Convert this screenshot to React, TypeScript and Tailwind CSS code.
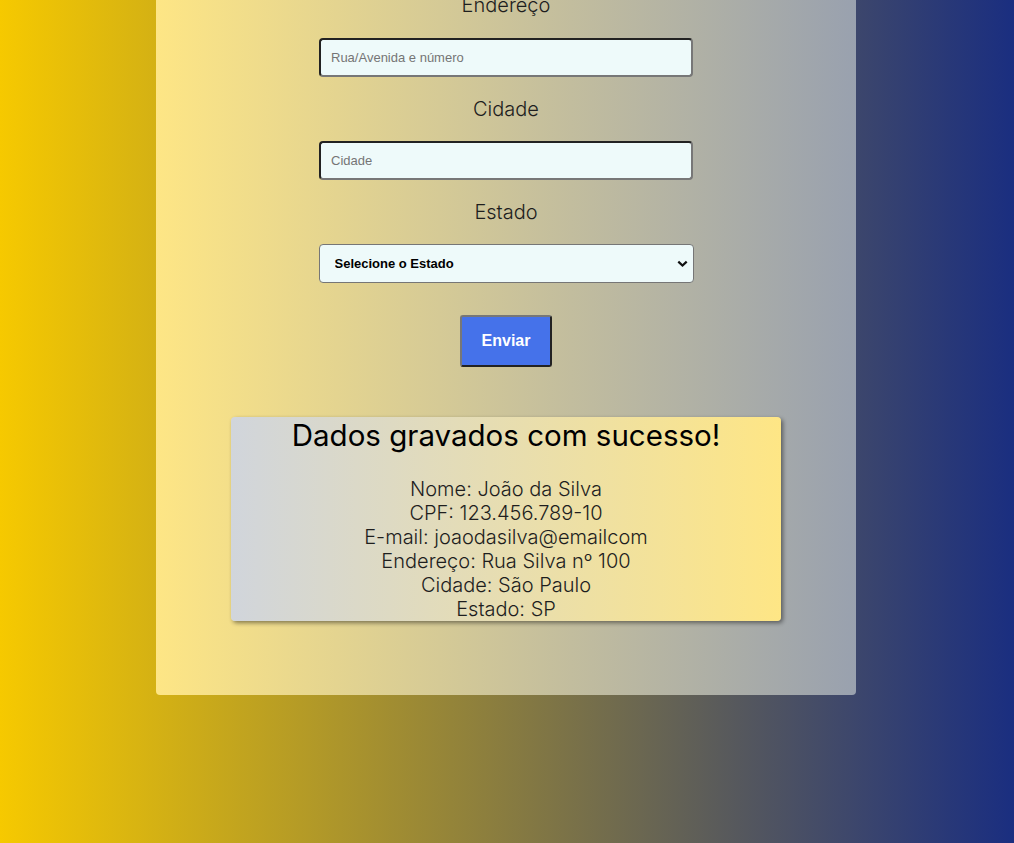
import React from "react";

const inputCls =
  "w-[374px] h-[39px] rounded-[4px] border-2 border-solid border-t-[#222] border-l-[#222] border-b-[#777] border-r-[#777] bg-[#eefafa] pl-[10px] text-[13px] text-black placeholder:text-[#757575] outline-none";

function Label({ children, className = "" }: { children: React.ReactNode; className?: string }) {
  return (
    <label className={"block text-[20px] leading-[24px] font-light text-[#1e1e1e] " + className}>
      {children}
    </label>
  );
}

export default function App() {
  const lines = [
    "Nome: João da Silva",
    "CPF: 123.456.789-10",
    "E-mail: joaodasilva@emailcom",
    "Endereço: Rua Silva nº 100",
    "Cidade: São Paulo",
    "Estado: SP",
  ];
  return (
    <div
      className="w-full h-screen overflow-hidden bg-linear-to-r/srgb from-[#f6c900] to-[#1a2e80] flex justify-center pr-[2px]"
      style={{ fontFamily: "Inter, 'Noto Sans', sans-serif" }}
    >
      <div className="w-[700px] h-fit rounded-b-[4px] bg-linear-to-r/srgb from-amber-200 to-gray-400 flex flex-col items-center pb-[74px]">
        <Label className="-mt-[7px]">Endereço</Label>
        <input
          className={inputCls + " mt-[21px]"}
          style={{ fontFamily: "'Liberation Sans', Arial, sans-serif" }}
          placeholder="Rua/Avenida e número"
        />
        <Label className="mt-[20px]">Cidade</Label>
        <input
          className={inputCls + " mt-[20px]"}
          style={{ fontFamily: "'Liberation Sans', Arial, sans-serif" }}
          placeholder="Cidade"
        />
        <Label className="mt-[20px]">Estado</Label>
        <div className="relative mt-[20px] w-[375px] h-[39px]">
          <select
            className="appearance-none w-full h-full rounded-[4px] border border-solid border-[#767676] bg-[#eefafa] pl-[15px] text-[13px] font-bold text-black outline-none"
            style={{ fontFamily: "'Liberation Sans', Arial, sans-serif" }}
            defaultValue=""
          >
            <option value="">Selecione o Estado</option>
            <option value="SP">SP</option>
          </select>
          <svg
            className="absolute right-[6px] top-[16px] pointer-events-none"
            width="11"
            height="8"
            viewBox="0 0 11 8"
          >
            <path d="M1.3 1.6 5.5 5.6 9.7 1.6" fill="none" stroke="#111" strokeWidth="2.2" />
          </svg>
        </div>
        <button
          className="mt-[32px] w-[92px] h-[52px] rounded-[3px] border-2 border-solid border-t-[#777] border-l-[#777] border-b-[#222] border-r-[#222] bg-[#4572ea] text-white text-[16px] font-bold"
          style={{ fontFamily: "'Liberation Sans', Arial, sans-serif" }}
        >
          Enviar
        </button>
        <div className="mt-[50px] w-[550px] rounded-[4px] bg-linear-to-r/srgb from-gray-300 to-amber-200 shadow-[2px_2px_4px_rgba(0,0,0,0.45)] text-center">
          <h2 className="text-[29.5px] leading-[36px] font-normal text-black">
            Dados gravados com sucesso!
          </h2>
          <div className="mt-[24px] flex flex-col">
            {lines.map((l) => (
              <p key={l} className="text-[20px] leading-[24px] font-light text-[#1e1e1e]">
                {l}
              </p>
            ))}
          </div>
        </div>
      </div>
    </div>
  );
}
